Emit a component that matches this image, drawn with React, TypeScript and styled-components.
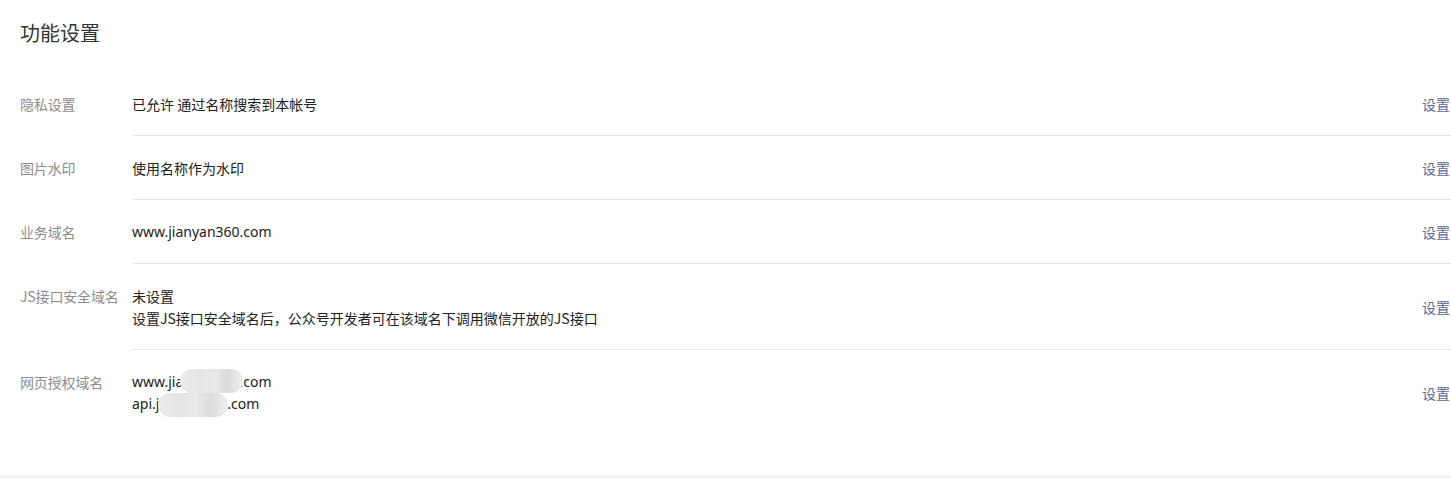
import React from "react";
import styled, { createGlobalStyle } from "styled-components";

const GlobalStyle = createGlobalStyle`
  html, body {
    margin: 0;
    padding: 0;
    background: #f2f2f2;
  }
  body {
    font-family: "Noto Sans", "Noto Sans CJK SC", sans-serif;
    color: #222;
  }
`;

const Panel = styled.section`
  background: #fff;
  padding: 0 0 39px 20px;
  width: 1431px;
`;

const Title = styled.h2`
  margin: 0;
  padding: 19px 0 25px;
  font-size: 20px;
  line-height: 28px;
  font-weight: 400;
  color: #353535;
  font-family: "Noto Sans CJK SC", sans-serif;
`;

const Row = styled.div`
  display: grid;
  grid-template-columns: 112px 1fr;
`;

const Label = styled.div`
  padding: 21px 0 20px;
  font-size: 14px;
  line-height: 22px;
  color: #8d8d8d;
  font-family: "Noto Sans CJK SC", sans-serif;
  white-space: nowrap;
  letter-spacing: -0.15px;
`;

const Body = styled.div<{ $last?: boolean }>`
  display: flex;
  align-items: center;
  justify-content: space-between;
  padding: 21px 0 20px;
  border-bottom: 1px solid ${(p) => (p.$last ? "transparent" : "#e7e7e7")};
`;

const Values = styled.div`
  display: flex;
  flex-direction: column;
  font-size: 14px;
  line-height: 22px;
  color: #222;
`;

const Line = styled.span<{ $latin?: boolean }>`
  font-family: ${(p) =>
    p.$latin
      ? `"Noto Sans", "Noto Sans CJK SC", sans-serif`
      : `"Noto Sans CJK SC", sans-serif`};
  position: relative;
  width: max-content;
`;

const Blur = styled.span`
  position: absolute;
  border-radius: 12px;
  background: linear-gradient(
    90deg,
    #ececec 0%,
    #e6e6e6 30%,
    #e9e9e9 55%,
    #dcdcdc 75%,
    #eeeeee 100%
  );
`;

const Link = styled.a`
  font-size: 14px;
  line-height: 22px;
  color: #576b95;
  text-decoration: none;
  font-family: "Noto Sans CJK SC", sans-serif;
  cursor: pointer;
  margin-right: 1px;
`;

type Item = {
  label: string;
  lines: { text: string; latin?: boolean; blur?: { left: number; width: number } }[];
};

const items: Item[] = [
  { label: "隐私设置", lines: [{ text: "已允许 通过名称搜索到本帐号" }] },
  { label: "图片水印", lines: [{ text: "使用名称作为水印" }] },
  { label: "业务域名", lines: [{ text: "www.jianyan360.com", latin: true }] },
  {
    label: "JS接口安全域名",
    lines: [
      { text: "未设置" },
      { text: "设置JS接口安全域名后，公众号开发者可在该域名下调用微信开放的JS接口" },
    ],
  },
  {
    label: "网页授权域名",
    lines: [
      { text: "www.jianyan360.com", latin: true, blur: { left: 48, width: 63 } },
      { text: "api.jianyan360.com", latin: true, blur: { left: 26, width: 70 } },
    ],
  },
];

export default function App() {
  return (
    <>
      <GlobalStyle />
      <Panel>
        <Title>功能设置</Title>
        {items.map((item, i) => (
          <Row key={item.label}>
            <Label>{item.label}</Label>
            <Body $last={i === items.length - 1}>
              <Values>
                {item.lines.map((l, j) => (
                  <Line key={j} $latin={l.latin}>
                    {l.text}
                    {l.blur && (
                      <Blur
                        style={{
                          left: l.blur.left,
                          width: l.blur.width,
                          top: j === 0 ? -2 : 0,
                          height: 24,
                        }}
                      />
                    )}
                  </Line>
                ))}
              </Values>
              <Link>设置</Link>
            </Body>
          </Row>
        ))}
      </Panel>
    </>
  );
}
